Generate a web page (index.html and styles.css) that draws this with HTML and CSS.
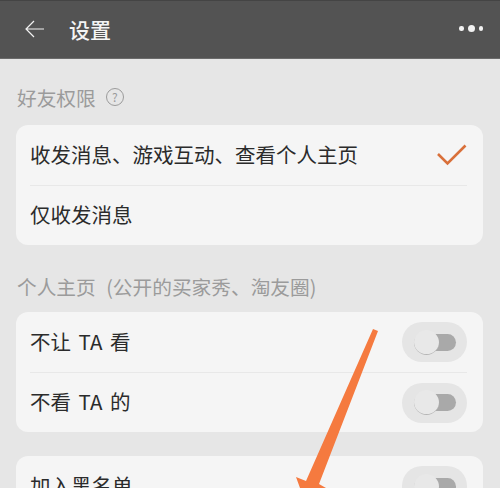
FILE: index.html
```html
<!DOCTYPE html>
<html lang="zh">
<head>
  <meta charset="UTF-8" />
  <title>设置</title>
  <link rel="stylesheet" href="styles.css">
</head>
<body>
  <div class="top-bar">
    <svg class="back-icon" width="19" height="18" viewBox="0 0 19 18">
      <path d="M9 1 L1 9 L9 17 M1 9 H19" fill="none" stroke="#f2f2f2" stroke-width="1.2"/>
    </svg>
    <div class="top-title">设置</div>
    <div class="more">
      <span class="dot"></span>
      <span class="dot big"></span>
      <span class="dot"></span>
    </div>
  </div>

  <div class="content">
    <div class="section-title">
      <span>好友权限</span>
      <span class="help">?</span>
    </div>
    <div class="card">
      <div class="row">
        <span>收发消息、游戏互动、查看个人主页</span>
        <svg class="check" width="30" height="22" viewBox="0 0 30 22">
          <path d="M1 10 L10.5 19.5 L28.5 1.5" fill="none" stroke="#d9703a" stroke-width="2.6"/>
        </svg>
      </div>
      <div class="row">
        <span>仅收发消息</span>
      </div>
    </div>

    <div class="section-title">
      <span>个人主页 <span class="paren">(公开的买家秀、淘友圈)</span></span>
    </div>
    <div class="card">
      <div class="row">
        <span class="spaced">不让 TA 看</span>
        <div class="switch"><div class="track"><div class="knob"></div></div></div>
      </div>
      <div class="row">
        <span class="spaced">不看 TA 的</span>
        <div class="switch"><div class="track"><div class="knob"></div></div></div>
      </div>
    </div>

    <div class="card last">
      <div class="row">
        <span>加入黑名单</span>
        <div class="switch"><div class="track"><div class="knob"></div></div></div>
      </div>
    </div>
  </div>

  <svg class="arrow" width="500" height="488" viewBox="0 0 500 488">
    <path d="M373 329 L378 331 L319 484 L326 488 L300 488 L296 477 L306 481 Z" fill="#f57a3f"/>
  </svg>
</body>
</html>
```

FILE: styles.css
```css
body {
  margin: 0;
  width: 500px;
  height: 488px;
  overflow: hidden;
  position: relative;
  background-color: #e6e6e6;
  font-family: "Noto Sans CJK SC", "Liberation Sans", sans-serif;
}
.top-bar {
  height: 59px;
  box-sizing: border-box;
  display: flex;
  align-items: center;
  padding: 0 17px 2px 25px;
  background-color: #535353;
  border-top: 1px solid #444;
  border-bottom: 1px solid #6b6b6b;
}
.back-icon {
  margin-right: 25px;
}
.top-title {
  flex: 1;
  color: #f4f4f4;
  font-size: 21px;
  font-weight: 500;
}
.more {
  display: flex;
  align-items: center;
  gap: 4px;
}
.dot {
  width: 4.5px;
  height: 4.5px;
  border-radius: 50%;
  background-color: #f2f2f2;
}
.dot.big {
  width: 7px;
  height: 7px;
}
.content {
  padding: 0 17px 0 16px;
}
.section-title {
  display: flex;
  align-items: center;
  height: 28px;
  margin: 27px 0 12px 1px;
  color: #9b9b9b;
  font-size: 19.7px;
  white-space: nowrap;
}
.section-title:first-child {
  margin: 24px 0 14px 1px;
}
.paren {
  margin-left: 6px;
}
.help {
  width: 16px;
  height: 16px;
  margin-left: 10px;
  border: 1px solid #9b9b9b;
  border-radius: 50%;
  font-size: 12px;
  line-height: 16px;
  text-align: center;
}
.card {
  background-color: #f5f5f5;
  border-radius: 12px;
  padding: 0 16px 0 14px;
}
.card.last {
  margin-top: 24px;
}
.row {
  height: 60px;
  display: flex;
  align-items: center;
  justify-content: space-between;
  box-sizing: border-box;
  color: #2b2b2b;
  font-size: 20.5px;
  white-space: nowrap;
}
.row > span {
  margin-bottom: 2px;
}
.row + .row {
  border-top: 1px solid #e8e8e8;
}
.row + .row > span {
  margin-bottom: 3px;
}
.spaced {
  word-spacing: 3px;
}
.switch {
  width: 65px;
  height: 40px;
  display: flex;
  align-items: center;
  justify-content: center;
  background-color: #e5e5e5;
  border-radius: 20px;
}
.track {
  width: 42px;
  height: 17px;
  position: relative;
  background-color: #a9a9a9;
  border-radius: 9px;
}
.knob {
  position: absolute;
  left: 0;
  top: -4px;
  width: 25px;
  height: 25px;
  box-sizing: border-box;
  background-color: #e8e8e8;
  border-radius: 50%;
  border-bottom: 1px solid #b5b5b5;
}
.arrow {
  position: absolute;
  left: 0;
  top: 0;
}
```
